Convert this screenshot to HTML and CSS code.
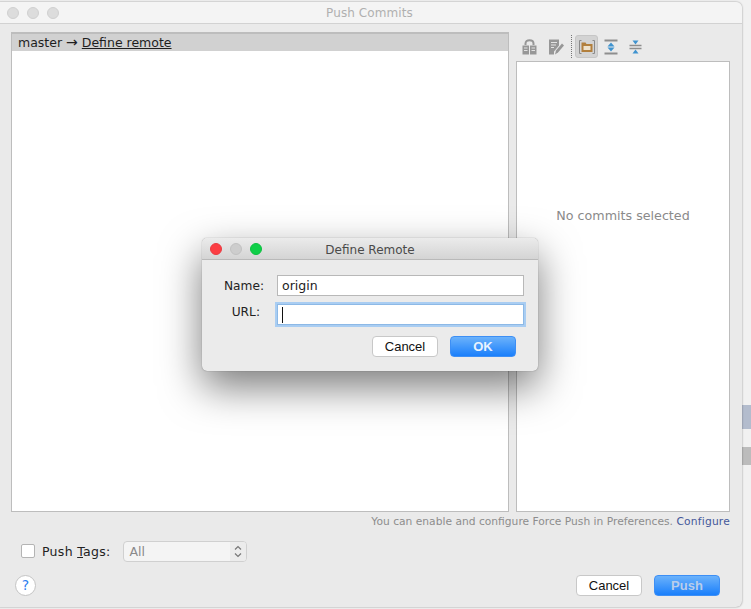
FILE: index.html
```html
<!DOCTYPE html>
<html lang="en">
<head>
<meta charset="utf-8">
<title>Push Commits</title>
<link rel="stylesheet" href="styles.css">
</head>
<body>
<div class="desk-bar desk-bar-blue"></div>
<div class="desk-bar desk-bar-grey"></div>

<main class="window">
  <header class="titlebar">
    <div class="lights">
      <span class="light"></span><span class="light"></span><span class="light"></span>
    </div>
    <div class="title">Push Commits</div>
  </header>
  <div class="content">
    <div class="panes">
      <section class="tree">
        <div class="tree-row">master <span class="arrow">→</span> <span class="link-under">Define remote</span></div>
      </section>
      <section class="side">
        <div class="toolbar">
          <svg class="tool" width="15" height="16" viewBox="0 0 15 16">
            <path d="M3.500 6V4.500C3.500 2.600 5.200 1.200 7.500 1.200s4 1.400 4 3.300V6" fill="none" stroke="#979797" stroke-width="2"/>
            <path d="M.5 6.500h6.500v9H.5zM8 6.500h6.500v9H8z" fill="#979797"/>
            <path d="M2 9h3.500M2 11.500h3.500M9.500 9H13M9.500 11.500H13" stroke="#e2e2e2"/>
          </svg>
          <svg class="tool" width="16" height="16" viewBox="0 0 16 16">
            <path d="M1 .5h10v6l-5 6v3H1z" fill="#979797"/>
            <path d="M3 3.500h6M3 6h5M3 8.500h3" stroke="#e4e4e4"/>
            <path d="M7 15.500l1-4 6-7 2 2-6 7z" fill="#979797"/>
          </svg>
          <span class="tool-sep"></span>
          <span class="tool-toggle">
            <svg width="16" height="16" viewBox="0 0 16 16">
              <path d="M2.500 1.500H.5v13h2M13.500 1.500h2v13h-2" fill="none" stroke="#8a8a8a"/>
              <path d="M2.500 3.500h4l1 1.500h6v8h-11z" fill="#b27f3c"/>
              <path d="M4.500 7h7v4h-7z" fill="#eee2cc"/>
            </svg>
          </span>
          <svg class="tool tool-gap" width="14" height="16" viewBox="0 0 14 16">
            <path d="M.5 1.500h13M.5 14.500h13" stroke="#8e8e8e" stroke-width="2"/>
            <path d="M7 3.500l3.500 4h-7zM7 12.500l3.500-4h-7z" fill="#3f93cf"/>
          </svg>
          <svg class="tool tool-gap2" width="13" height="16" viewBox="0 0 13 16">
            <path d="M.5 6.500h12M.5 9.500h12" stroke="#8e8e8e" stroke-width="1.500"/>
            <path d="M6.500 5.500l-3-4h6zM6.500 10.500l3 4h-6z" fill="#3f93cf"/>
          </svg>
        </div>
        <div class="details">No commits selected</div>
      </section>
    </div>
    <p class="hint">You can enable and configure Force Push in Preferences. <a class="configure">Configure</a></p>
    <div class="tags">
      <span class="check"></span>
      <span class="tags-label">Push <u>T</u>ags:</span>
      <div class="select">
        <span class="select-value">All</span>
        <span class="select-arrows">
          <svg width="10" height="15" viewBox="0 0 10 15">
            <path d="M2 5.500l3-3 3 3M2 9.500l3 3 3-3" fill="none" stroke="#777" stroke-width="1.200"/>
          </svg>
        </span>
      </div>
    </div>
    <div class="footer">
      <span class="help">?</span>
      <div class="footer-buttons">
        <button class="btn">Cancel</button>
        <button class="btn btn-primary btn-dim">Push</button>
      </div>
    </div>
  </div>
</main>

<div class="dialog">
  <header class="dialog-bar">
    <div class="lights lights-dialog">
      <span class="light light-red"></span><span class="light light-grey"></span><span class="light light-green"></span>
    </div>
    <div class="dialog-title">Define Remote</div>
  </header>
  <div class="dialog-body">
    <div class="field field-name">
      <label class="field-label">Name:</label>
      <div class="input">origin</div>
    </div>
    <div class="field field-url">
      <label class="field-label label-url">URL:</label>
      <div class="input input-focus"><span class="caret"></span></div>
    </div>
    <div class="dialog-buttons">
      <button class="btn">Cancel</button>
      <button class="btn btn-primary">OK</button>
    </div>
  </div>
</div>
</body>
</html>
```

FILE: styles.css
```css
* { box-sizing: border-box; }
html, body { margin: 0; height: 100%; }
body {
  position: relative;
  width: 751px;
  height: 609px;
  overflow: hidden;
  background: #f1f1f1;
  font-family: "DejaVu Sans", sans-serif;
  font-size: 12.5px;
  color: #222;
}
.desk-bar { position: absolute; left: 742px; width: 9px; }
.desk-bar-blue { top: 405px; height: 24px; background: #b3bccd; }
.desk-bar-grey { top: 447px; height: 18px; background: #bcbcbc; }

.window {
  position: absolute;
  left: -6px;
  top: 2px;
  width: 748px;
  height: 605px;
  background: #eaeaea;
  border-radius: 6px;
  box-shadow: 0 0 2px rgba(0,0,0,.45);
  display: flex;
  flex-direction: column;
}
.titlebar {
  height: 22px;
  flex: none;
  background: #f4f4f4;
  border-bottom: 1px solid #d2d2d2;
  border-radius: 6px 6px 0 0;
  position: relative;
  display: flex;
  align-items: center;
}
.lights { display: flex; gap: 8px; padding-left: 13px; }
.light {
  width: 12px;
  height: 12px;
  border-radius: 50%;
  background: #dcdcdc;
  border: 1px solid #d0d0d0;
}
.title {
  position: absolute;
  left: 0;
  right: 0;
  text-align: center;
  color: #b0b0b0;
  font-size: 12px;
  letter-spacing: .1px;
  padding-left: 3px;
}
.content {
  flex: 1;
  display: flex;
  flex-direction: column;
  padding: 8px 12px 0 17px;
}
.panes { display: flex; gap: 7px; height: 480px; flex: none; }
.tree {
  width: 498px;
  background: #fff;
  border: 1px solid #bdbdbd;
  border-top-width: 2px;
}
.tree-row {
  height: 17px;
  padding-left: 6px;
  background: #d1d1d1;
  line-height: 17px;
  color: #1e1e1e;
}
.arrow { font-size: 14px; line-height: 14px; }
.link-under { text-decoration: underline; }
.side { flex: 1; display: flex; flex-direction: column; }
.toolbar { height: 29px; flex: none; display: flex; align-items: center; padding-left: 6px; }
.tool { flex: none; display: block; }
.tool + .tool { margin-left: 11px; }
.tool-sep {
  width: 1px;
  height: 23px;
  margin: 0 3px 0 7px;
  border-left: 1px dotted #777;
}
.tool-toggle {
  width: 23px;
  height: 23px;
  display: flex;
  align-items: center;
  justify-content: center;
  background: #d3d3d3;
  border: 1px solid #c6c6c6;
  border-radius: 3px;
}
.tool-gap { margin-left: 6px; }
.tool.tool-gap2 { margin-left: 11px; }
.details {
  flex: 1;
  background: #fff;
  border: 1px solid #bdbdbd;
  display: flex;
  align-items: center;
  justify-content: center;
  color: #8a8a8a;
  font-size: 12.7px;
  padding-bottom: 142px;
}
.hint {
  margin: 2px 0 0;
  height: 15px;
  text-align: right;
  font-size: 10.7px;
  line-height: 15px;
  color: #8d8d8d;
}
.configure { color: #44589a; letter-spacing: .2px; }
.tags { display: flex; align-items: center; margin-top: 10px; padding-left: 10px; height: 24px; }
.check {
  width: 14px;
  height: 14px;
  background: #fff;
  border: 1px solid #b4b4b4;
  border-radius: 2px;
  flex: none;
}
.tags-label { margin-left: 7px; color: #222; letter-spacing: .3px; }
.select {
  width: 124px;
  height: 21px;
  margin-left: 12px;
  display: flex;
  justify-content: space-between;
  background: #f4f4f4;
  border: 1px solid #d0d0d0;
  border-radius: 4px;
}
.select-value { padding-left: 6px; line-height: 19px; color: #8a8a8a; }
.select-arrows {
  width: 16px;
  display: flex;
  align-items: center;
  justify-content: center;
  background: #ececec;
  border-radius: 0 3px 3px 0;
}
.footer {
  display: flex;
  justify-content: space-between;
  align-items: center;
  margin-top: 12px;
  padding: 0 10px 0 4px;
}
.help {
  width: 21px;
  height: 21px;
  border-radius: 50%;
  background: #fff;
  border: 1px solid #c4c4c4;
  color: #2f7ff0;
  text-align: center;
  line-height: 19px;
  font-size: 14px;
}
.footer-buttons { display: flex; gap: 12px; }
.btn {
  width: 66px;
  height: 21px;
  padding: 0;
  background: #fff;
  border: 1px solid #c8c8c8;
  border-radius: 4px;
  font-family: "Liberation Sans", sans-serif;
  font-size: 13px;
  color: #111;
}
.btn-primary {
  background: linear-gradient(#6bb2fb, #1a7ffb);
  border-color: #3d8ff5;
  color: #eaf3fe;
  font-weight: 700;
}
.btn-dim { color: #b9cdea; }

.dialog {
  position: absolute;
  left: 202px;
  top: 238px;
  width: 336px;
  height: 133px;
  background: #ebebeb;
  border-radius: 5px;
  box-shadow: 0 0 1px rgba(0,0,0,.5), 0 16px 40px rgba(0,0,0,.52);
}
.dialog-bar {
  height: 22px;
  position: relative;
  display: flex;
  align-items: center;
  background: linear-gradient(#ebebeb, #d4d4d4);
  border-bottom: 1px solid #b9b9b9;
  border-radius: 5px 5px 0 0;
}
.lights-dialog { padding-left: 8px; }
.light-red { background: #fc3d43; border-color: #e93a40; }
.light-grey { background: #cdcdcd; border-color: #c2c2c2; }
.light-green { background: #0fcf48; border-color: #0cc040; }
.dialog-title {
  position: absolute;
  left: 0;
  right: 0;
  top: 5px;
  text-align: center;
  font-size: 12px;
  color: #4a4a4a;
}
.dialog-body { padding: 15px 14px 0 0; }
.field { display: flex; align-items: center; }
.field-label { width: 62px; text-align: right; color: #222; font-size: 12.2px; }
.label-url { width: 58px; margin-top: -5px; }
.input {
  width: 247px;
  height: 21px;
  margin-left: 13px;
  padding-left: 4px;
  background: #fff;
  border: 1px solid #b8b8b8;
  line-height: 19px;
  color: #222;
}
.field-url { margin-top: 8px; }
.input-focus {
  margin-left: 17px;
  width: 247px;
  border: 1px solid #8db9e6;
  box-shadow: 0 0 0 2px #a9cdf2;
  display: flex;
  align-items: center;
  padding-left: 4px;
}
.caret { width: 1px; height: 16px; background: #111; }
.dialog-buttons {
  display: flex;
  justify-content: flex-end;
  gap: 12px;
  margin-top: 11px;
  padding-right: 8px;
}
```
